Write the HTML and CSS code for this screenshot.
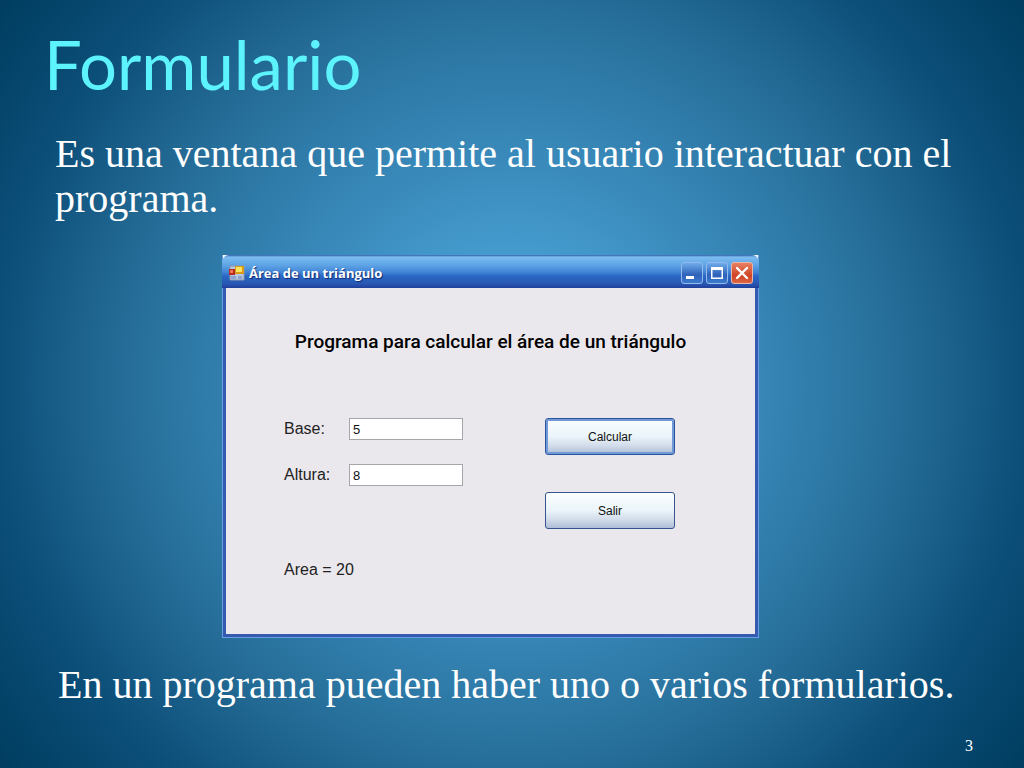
FILE: index.html
```html
<!DOCTYPE html>
<html lang="es">
<head>
<meta charset="utf-8">
<meta name="viewport" content="width=device-width, initial-scale=1">
<title>Formulario</title>
<link rel="stylesheet" href="styles.css">
</head>
<body>
<main class="slide">
  <h1 class="title">Formulario</h1>
  <p class="text">Es una ventana que permite al usuario interactuar con el programa.</p>
  <section class="window" aria-label="Área de un triángulo">
    <header class="titlebar">
      <svg class="app-icon" viewBox="0 0 16 16" aria-hidden="true">
        <path d="M1 1h14v14H1z" fill="#b9c6e0" stroke="#8b96ab"/>
        <path d="M2 11h5v3H2zM9 11h4v3H9z" fill="#8ca3cf"/>
        <path d="M0 4h6v6H0z" fill="#b52b20"/>
        <path d="M1 5h3v3H1z" fill="#ef7654"/>
        <path d="M6 1h9v8H6z" fill="#d99a1c"/>
        <path d="M7 2h6v5H7z" fill="#ffe45e"/>
      </svg>
      <h2 class="caption">Área de un triángulo</h2>
      <div class="controls">
        <button class="control" type="button" aria-label="Minimizar"><svg viewBox="0 0 20 20"><path d="M4 13h8v3H4z" fill="#fff"/></svg></button>
        <button class="control" type="button" aria-label="Maximizar"><svg viewBox="0 0 20 20"><path d="M4 4h12v12H4zM5.500 7v7.500h9V7z" fill="#fff" fill-rule="evenodd"/></svg></button>
        <button class="control close" type="button" aria-label="Cerrar"><svg viewBox="0 0 20 20"><path d="M5 5l10 10M15 5L5 15" stroke="#fff" stroke-width="2.400" stroke-linecap="round"/></svg></button>
      </div>
    </header>
    <form class="client">
      <h3 class="heading">Programa para calcular el área de un triángulo</h3>
      <div class="columns">
        <div class="fields">
          <label for="base">Base:</label><input id="base" type="text" value="5">
          <label for="altura">Altura:</label><input id="altura" type="text" value="8">
        </div>
        <div class="actions">
          <button class="action primary" type="button">Calcular</button>
          <button class="action" type="button">Salir</button>
        </div>
      </div>
      <output class="result" for="base altura">Area = 20</output>
    </form>
  </section>
  <p class="text closing">En un programa pueden haber uno o varios formularios.</p>
  <footer class="page-number">3</footer>
</main>
</body>
</html>
```
FILE: styles.css
```css
* { box-sizing: border-box; }
body { margin: 0; }
h1, h2, h3, p { margin: 0; font-weight: 400; }

.slide {
  display: flex;
  flex-direction: column;
  min-height: 100vh;
  padding: 24px 44px 12px;
  background: radial-gradient(circle, #4aa3d6 0, #459bce 130px, #3584b4 260px, #266e99 384px, #0b4e78 520px, #003d60 640px);
  color: #fff;
  font-family: "Liberation Serif", serif;
}
.title {
  color: #5cf3fc;
  font-family: Lato, sans-serif;
  font-size: 67px;
  line-height: 80px;
}
.text {
  padding: 0 11px;
  margin-top: 27px;
  font-size: 40px;
  line-height: 45px;
}
.window {
  align-self: center;
  width: 537px;
  max-width: 100%;
  margin: 34px 43px 0 0;
  padding: 0 3px 3px;
  border: 1px solid #6b9ce8;
  border-top: 0;
  background: linear-gradient(#fff 0, #fff 6px, #345bb0 7px);
  font-family: "Liberation Sans", sans-serif;
}
.titlebar {
  display: flex;
  align-items: center;
  gap: 4px;
  height: 33px;
  margin: 0 -4px;
  padding: 2px 6px 0 7px;
  border-radius: 7px 7px 0 0;
  background: linear-gradient(#315eaa 0, #7cbcf0 2px, #5ea4e6 10px, #4386d6 17px, #2a68c5 21px, #2856b2 29px, #203f99 33px);
}
.app-icon { width: 16px; height: 16px; }
.caption {
  font-family: "Open Sans", sans-serif;
  flex: 1;
  font-size: 13px;
  font-weight: 700;
  text-shadow: 1px 1px 1px #102b77;
}
.controls { display: flex; gap: 3px; }
.control {
  width: 22px;
  height: 22px;
  padding: 0;
  border: 1px solid #94b9ec;
  border-radius: 3px;
  background: linear-gradient(#6facea, #2e62b9 60%, #3c7bcd);
}
.control svg { display: block; width: 20px; height: 20px; }
.close { border-color: #edb5a6; background: linear-gradient(#e78062, #cf4325 65%, #dd6945); }
.client {
  min-height: 346px;
  padding: 42px 58px 52px;
  background: #ebe8ed;
  color: #222;
}
.heading {
  color: #000;
  font-family: Roboto, sans-serif;
  font-size: 19px;
  font-weight: 500;
  line-height: 24px;
  text-align: center;
}
.columns {
  display: flex;
  justify-content: space-between;
  gap: 24px;
  margin-top: 64px;
  padding-right: 22px;
}
.fields {
  display: grid;
  grid-template-columns: 65px 114px;
  row-gap: 24px;
  align-content: start;
  align-items: center;
  font-size: 16px;
}
.fields input {
  width: 100%;
  height: 22px;
  padding: 0 3px;
  border: 1px solid #a5a5aa;
  background: #fff;
  color: #111;
  font: 13px "Liberation Sans", sans-serif;
}
.actions { display: grid; gap: 37px; width: 130px; }
.action {
  height: 37px;
  border: 1px solid #36558e;
  border-radius: 3px;
  background: linear-gradient(#fbfeff, #eaf4fa 50%, #d3ddeb 75%, #aebed7);
  color: #111;
  font: 12px "Liberation Sans", sans-serif;
}
.primary { border-color: #2853a0; box-shadow: inset 0 0 0 2px #7199d6; }
.result { display: block; margin-top: 31px; font-size: 16px; line-height: 20px; }
.closing { padding: 0 14px; margin-top: 24px; }
.page-number {
  margin-top: auto;
  padding-right: 7px;
  font-size: 16px;
  line-height: 20px;
  text-align: right;
}
```
